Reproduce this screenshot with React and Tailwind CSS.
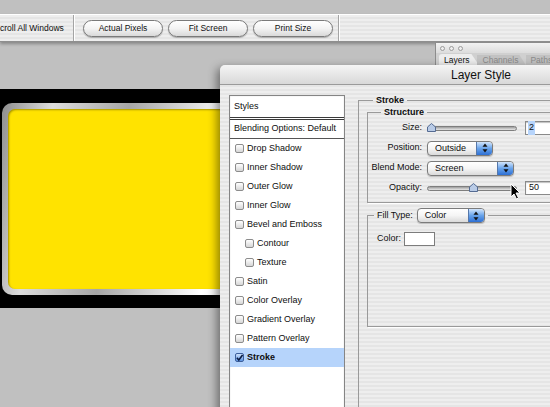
import React from "react";

const stripes =
  "bg-[repeating-linear-gradient(0deg,#eeeeee_0px,#eeeeee_2px,#e5e5e5_2px,#e5e5e5_4px)]";

function ToolButton({ children }) {
  return (
    <div className="flex h-[17px] w-[80px] items-center justify-center rounded-full border border-[#7a7a7a] bg-gradient-to-b from-white via-[#f3f3f3] to-[#d9d9d9] text-[8.5px] text-[#111] shadow-[0_1px_1px_rgba(0,0,0,0.25)]">
      {children}
    </div>
  );
}

function Check({ checked }) {
  if (checked) {
    return (
      <span className="flex h-[9px] w-[9px] items-center justify-center rounded-[2px] border border-[#3c5f9c] bg-gradient-to-b from-[#cfe2fb] to-[#5b93e0]">
        <svg width="8" height="8" viewBox="0 0 8 8">
          <path d="M1 3.8 L3.2 6.2 L7.5 0.5" fill="none" stroke="#0a1a40" strokeWidth="1.8" />
        </svg>
      </span>
    );
  }
  return (
    <span className="h-[9px] w-[9px] rounded-[2px] border border-[#8c8c8c] bg-gradient-to-b from-white to-[#d6d6d6]" />
  );
}

function StyleItem({ label, indent, checked }) {
  return (
    <div
      className={
        "flex h-[19px] items-center gap-[3px] " +
        (indent ? "pl-[15px] " : "pl-[5px] ") +
        (checked ? "bg-[#b6d4fb] font-bold" : "")
      }
    >
      <Check checked={checked} />
      <span>{label}</span>
    </div>
  );
}

function Stepper() {
  return (
    <span className="flex w-[16px] items-center justify-center rounded-r-[3px] border-l border-[#5577aa] bg-gradient-to-b from-[#d2e5fb] via-[#68a3ea] to-[#2d6fd4]">
      <svg width="6" height="10" viewBox="0 0 6 10">
        <path d="M3 0.5 L5.5 3.8 L0.5 3.8 Z" fill="#111" />
        <path d="M3 9.5 L5.5 6.2 L0.5 6.2 Z" fill="#111" />
      </svg>
    </span>
  );
}

function Popup({ label, width }) {
  return (
    <div
      className={
        "flex h-[15px] items-stretch overflow-hidden rounded-[4px] border border-[#7b7b7b] bg-gradient-to-b from-white via-[#f5f5f5] to-[#dadada] shadow-[0_1px_1px_rgba(0,0,0,0.2)] " +
        width
      }
    >
      <span className="flex-1 pl-[7px] leading-[13px]">{label}</span>
      <Stepper />
    </div>
  );
}

function Slider({ thumb }) {
  return (
    <div className="relative flex h-[12px] w-[90px] items-center">
      <div className="h-[5px] w-full rounded-full border border-[#7e7e7e] bg-gradient-to-b from-[#9c9c9c] via-[#c4c4c4] to-[#e6e6e6]" />
      <svg className={"absolute top-[1px] " + thumb} width="9" height="9" viewBox="0 0 9 9">
        <path d="M4.5 0.5 L8.5 4 L8.5 8.5 L0.5 8.5 L0.5 4 Z" fill="#b9cbe6" stroke="#556b92" strokeWidth="1" />
      </svg>
    </div>
  );
}

function TextBox({ children, selected }) {
  return (
    <div className="flex h-[14px] w-[34px] items-center border border-[#8a8a8a] bg-white pl-[2px] shadow-[inset_0_1px_1px_rgba(0,0,0,0.25)]">
      <span className={selected ? "bg-[#b6d4fb] px-[1px]" : "px-[1px]"}>{children}</span>
    </div>
  );
}

function Row({ label, children }) {
  return (
    <div className="flex h-[20px] items-center">
      <span className="w-[54px] text-right">{label}</span>
      <div className="ml-[5px] flex items-center">{children}</div>
    </div>
  );
}

export default function App() {
  return (
    <div
      className="relative h-[407px] w-[550px] overflow-hidden bg-[#c0c0c0] text-[9px] text-[#0e0e0e]"
      style={{ fontFamily: '"Liberation Sans", Arial, sans-serif' }}
    >
      {/* options bar */}
      <div className={"mt-[14px] flex h-[28px] items-center border-t border-b border-t-white border-b-[#8e8e8e] shadow-[0_2px_3px_rgba(0,0,0,0.3)] " + stripes}>
        <span className="w-[73px] text-[8.5px]">croll All Windows</span>
        <div className="h-full w-[2px] border-l border-[#a4a4a4] bg-white" />
        <div className="ml-[8px] flex gap-[5px]">
          <ToolButton>Actual Pixels</ToolButton>
          <ToolButton>Fit Screen</ToolButton>
          <ToolButton>Print Size</ToolButton>
        </div>
        <div className="ml-[5px] h-full w-[2px] border-l border-[#a4a4a4] bg-white" />
      </div>

      {/* document canvas */}
      <div className="mt-[47px] h-[219px] w-[240px] bg-black pt-[14px] pl-[2px]">
        <div className="h-[192px] w-[250px] rounded-[10px] bg-[linear-gradient(100deg,#8e8e8e_0%,#dcdcdc_18%,#a6a6a6_45%,#ffffff_82%,#d6d6d6_100%)] p-[6px]">
          <div className="h-full w-full rounded-[7px] bg-[#ffe300] shadow-[inset_1px_1px_2px_rgba(0,0,0,0.35)]" />
        </div>
      </div>

      {/* layers palette */}
      <div className="absolute left-[435px] top-[42px] h-[30px] w-[130px] border-l border-t border-[#8c8c8c] bg-[#d0d0d0]">
        <div className="flex h-[10px] items-center gap-[4px] bg-gradient-to-b from-[#f2f2f2] to-[#dcdcdc] pl-[4px]">
          <span className="h-[5px] w-[5px] rounded-full border border-[#9a9a9a] bg-[#eeeeee]" />
          <span className="h-[5px] w-[5px] rounded-full border border-[#9a9a9a] bg-[#eeeeee]" />
          <span className="h-[5px] w-[5px] rounded-full border border-[#9a9a9a] bg-[#eeeeee]" />
        </div>
        <div className="flex h-[13px] items-end pl-[3px] text-[8.5px]">
          <span className="h-[12px] rounded-tl-[3px] bg-[#ededed] pl-[5px] pr-[10px] leading-[12px] text-[#111] [clip-path:polygon(0_0,80%_0,100%_100%,0_100%)]">Layers</span>
          <span className="ml-[-3px] h-[11px] bg-[#c2c2c2] pl-[6px] pr-[8px] leading-[11px] text-[#8a8a8a] [clip-path:polygon(0_0,86%_0,100%_100%,0_100%)]">Channels</span>
          <span className="h-[11px] bg-[#c2c2c2] pl-[4px] leading-[11px] text-[#8a8a8a]">Paths</span>
        </div>
      </div>

      {/* Layer Style dialog */}
      <div className="absolute left-[220px] top-[65px] h-[360px] w-[522px] rounded-tl-[5px] shadow-[-3px_3px_10px_rgba(0,0,0,0.45)]">
        <div className="flex h-[20px] items-center justify-center rounded-tl-[5px] border-b border-[#9a9a9a] bg-gradient-to-b from-[#f5f5f5] to-[#d8d8d8] text-[12px] text-[#111]">
          Layer Style
        </div>
        <div className={"flex h-[340px] pt-[10px] pl-[9px] " + stripes}>
          {/* styles list */}
          <div className="h-[330px] w-[116px] border border-[#858585] bg-white shadow-[inset_0_0_1px_rgba(0,0,0,0.3)]">
            <div className="flex h-[21px] items-center pl-[4px]">Styles</div>
            <div className="h-[3px] border-y border-[#3a3a3a]" />
            <div className="flex h-[19px] items-center border-b border-[#555] pl-[4px]">Blending Options: Default</div>
            <StyleItem label="Drop Shadow" />
            <StyleItem label="Inner Shadow" />
            <StyleItem label="Outer Glow" />
            <StyleItem label="Inner Glow" />
            <StyleItem label="Bevel and Emboss" />
            <StyleItem label="Contour" indent />
            <StyleItem label="Texture" indent />
            <StyleItem label="Satin" />
            <StyleItem label="Color Overlay" />
            <StyleItem label="Gradient Overlay" />
            <StyleItem label="Pattern Overlay" />
            <StyleItem label="Stroke" checked />
          </div>

          {/* settings */}
          <fieldset className="ml-[13px] h-[340px] w-[220px] border border-[#9a9a9a] shadow-[1px_1px_0_#fff]">
            <legend className="ml-[14px] px-[3px] font-bold leading-[11px]">Stroke</legend>
            <fieldset className="ml-[8px] mt-[1px] border border-[#9a9a9a] shadow-[1px_1px_0_#fff]">
              <legend className="ml-[13px] px-[3px] font-bold leading-[11px]">Structure</legend>
              <div className="pb-[4px]">
                <Row label="Size:">
                  <Slider thumb="left-[0px]" />
                  <div className="ml-[8px]">
                    <TextBox selected>2</TextBox>
                  </div>
                </Row>
                <Row label="Position:">
                  <Popup label="Outside" width="w-[66px]" />
                </Row>
                <Row label="Blend Mode:">
                  <Popup label="Screen" width="w-[87px]" />
                </Row>
                <Row label="Opacity:">
                  <Slider thumb="left-[42px]" />
                  <div className="ml-[8px]">
                    <TextBox>50</TextBox>
                  </div>
                </Row>
              </div>
            </fieldset>
            <fieldset className="ml-[8px] mt-[5px] border border-[#9a9a9a] shadow-[1px_1px_0_#fff]">
              <legend className="ml-[6px] flex items-center gap-[4px] px-[3px]">
                <span>Fill Type:</span>
                <Popup label="Color" width="w-[68px]" />
              </legend>
              <div className="h-[103px] pl-[9px] pt-[9px]">
                <div className="flex items-center gap-[3px]">
                  <span>Color:</span>
                  <span className="h-[14px] w-[31px] border border-[#7c7c7c] bg-white" />
                </div>
              </div>
            </fieldset>
          </fieldset>
        </div>
      </div>

      {/* mouse cursor */}
      <svg className="absolute left-[510px] top-[183px]" width="11" height="17" viewBox="0 0 11 17">
        <path d="M1 1 L1 14 L4 11 L6.5 16 L8.5 15 L6 10 L10 10 Z" fill="#000" stroke="#fff" strokeWidth="1" />
      </svg>
    </div>
  );
}
